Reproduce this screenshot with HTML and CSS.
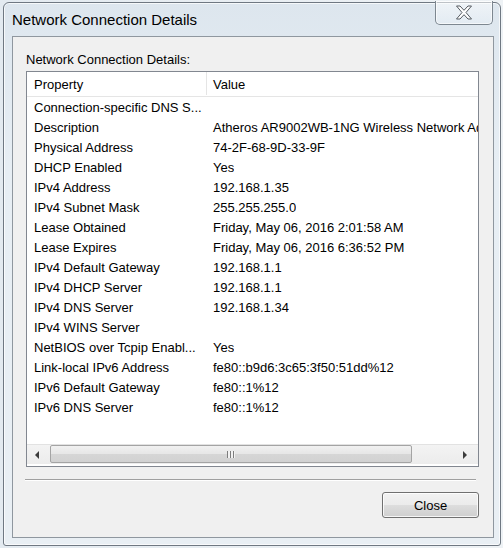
FILE: index.html
```html
<!DOCTYPE html>
<html lang="en">
<head>
    <meta charset="UTF-8">
    <meta name="viewport" content="width=device-width, initial-scale=1.0">
    <title>Network Connection Details</title>
    <link rel="stylesheet" href="styles.css">
</head>
<body>
    <div class="window">
        <div class="titlebar">
            <span class="title">Network Connection Details</span>
            <button class="close-x" aria-label="Close">
                <svg width="18" height="15" viewBox="0 0 18 15">
                    <polygon points="1.5,1 5,1 9,5.3 13,1 16.5,1 11,7.5 16.5,14 13,14 9,9.7 5,14 1.5,14 7,7.5" fill="#ffffff" stroke="#555b61" stroke-width="1" stroke-linejoin="round"/>
                </svg>
            </button>
        </div>

        <div class="client">
            <div class="caption">Network Connection Details:</div>

            <div class="list">
                <div class="list-head">
                    <div class="head-prop">Property</div>
                    <div class="head-val">Value</div>
                </div>
                <div class="rows">
                    <div class="row"><span class="prop">Connection-specific DNS S...</span><span class="val"></span></div>
                    <div class="row"><span class="prop">Description</span><span class="val">Atheros AR9002WB-1NG Wireless Network Adapter</span></div>
                    <div class="row"><span class="prop">Physical Address</span><span class="val">74-2F-68-9D-33-9F</span></div>
                    <div class="row"><span class="prop">DHCP Enabled</span><span class="val">Yes</span></div>
                    <div class="row"><span class="prop">IPv4 Address</span><span class="val">192.168.1.35</span></div>
                    <div class="row"><span class="prop">IPv4 Subnet Mask</span><span class="val">255.255.255.0</span></div>
                    <div class="row"><span class="prop">Lease Obtained</span><span class="val">Friday, May 06, 2016 2:01:58 AM</span></div>
                    <div class="row"><span class="prop">Lease Expires</span><span class="val">Friday, May 06, 2016 6:36:52 PM</span></div>
                    <div class="row"><span class="prop">IPv4 Default Gateway</span><span class="val">192.168.1.1</span></div>
                    <div class="row"><span class="prop">IPv4 DHCP Server</span><span class="val">192.168.1.1</span></div>
                    <div class="row"><span class="prop">IPv4 DNS Server</span><span class="val">192.168.1.34</span></div>
                    <div class="row"><span class="prop">IPv4 WINS Server</span><span class="val"></span></div>
                    <div class="row"><span class="prop">NetBIOS over Tcpip Enabl...</span><span class="val">Yes</span></div>
                    <div class="row"><span class="prop">Link-local IPv6 Address</span><span class="val">fe80::b9d6:3c65:3f50:51dd%12</span></div>
                    <div class="row"><span class="prop">IPv6 Default Gateway</span><span class="val">fe80::1%12</span></div>
                    <div class="row"><span class="prop">IPv6 DNS Server</span><span class="val">fe80::1%12</span></div>
                </div>
                <div class="hscroll">
                    <div class="arrow arrow-left"></div>
                    <div class="thumb"><span class="grip"></span></div>
                    <div class="track"></div>
                    <div class="arrow arrow-right"></div>
                </div>
            </div>

            <div class="sep"></div>

            <div class="actions">
                <button class="btn">Close</button>
            </div>
        </div>
    </div>
</body>
</html>
```

FILE: styles.css
```css
body {
    margin: 0;
    height: 548px;
    overflow: hidden;
    background: linear-gradient(to right, #e3eaf0, #eef2f5);
    font-family: "Liberation Sans", Arial, sans-serif;
    color: #000;
}
.window {
    margin: 2px 0 0 3px;
    width: 498px;
    height: 544px;
    box-sizing: border-box;
    border: 1px solid #6f7882;
    border-radius: 6px 6px 3px 3px;
    background: linear-gradient(to bottom, #dde6ee 0%, #e7eef4 30%, #e9eff4 100%);
    box-shadow: inset 0 0 0 1px rgba(255, 255, 255, 0.7);
    display: flex;
    flex-direction: column;
}
.titlebar {
    height: 33px;
    display: flex;
    align-items: flex-start;
    flex-shrink: 0;
}
.title {
    padding: 7px 0 0 8px;
    font-size: 15px;
    line-height: 20px;
    color: #000;
}
.close-x {
    margin: -2px 7px 0 auto;
    width: 58px;
    height: 24px;
    padding: 0;
    border: 1px solid #7d8790;
    border-top: none;
    border-radius: 0 0 5px 5px;
    background: linear-gradient(to bottom, rgba(255, 255, 255, 0.55), rgba(230, 238, 245, 0.6));
    box-shadow: inset 0 0 0 1px rgba(255, 255, 255, 0.6);
    display: flex;
    align-items: center;
    justify-content: center;
}
.client {
    flex: 1;
    margin: 0 6px 7px 8px;
    border: 1px solid #8f979f;
    background-color: #f0f0f0;
    padding: 15px 14px 0 13px;
    display: flex;
    flex-direction: column;
}
.caption {
    font-size: 13px;
    line-height: 16px;
    margin-bottom: 3px;
}
.list {
    height: 396px;
    box-sizing: border-box;
    border: 1px solid #828790;
    background-color: #fff;
    display: flex;
    flex-direction: column;
    overflow: hidden;
    font-size: 13px;
}
.list-head {
    display: flex;
    height: 24px;
    border-bottom: 1px solid #e5e5e5;
    flex-shrink: 0;
}
.head-prop,
.head-val {
    padding-top: 2px;
    line-height: 22px;
}
.head-prop {
    width: 172px;
    padding-left: 7px;
    border-right: 1px solid #e5e5e5;
    margin-bottom: 1px;
}
.head-val {
    padding-left: 6px;
}
.rows {
    flex: 1;
    padding-top: 1px;
}
.row {
    display: flex;
    height: 20px;
    line-height: 20px;
    white-space: nowrap;
}
.prop {
    width: 173px;
    padding-left: 7px;
    flex-shrink: 0;
    overflow: hidden;
}
.val {
    padding-left: 6px;
    overflow: hidden;
}
.hscroll {
    display: flex;
    height: 19px;
    margin-bottom: 2px;
    border-top: 1px solid #e2e2e2;
    background: linear-gradient(to bottom, #f3f3f3, #ececec);
    flex-shrink: 0;
}
.arrow {
    width: 23px;
    position: relative;
}
.arrow-left::after,
.arrow-right::after {
    content: "";
    position: absolute;
    top: 6px;
    border-top: 4px solid transparent;
    border-bottom: 4px solid transparent;
}
.arrow-left::after {
    left: 8px;
    border-right: 4px solid #3c3c3c;
}
.arrow-right::after {
    right: 11px;
    border-left: 4px solid #3c3c3c;
}
.thumb {
    width: 360px;
    margin: 0 0 1px;
    border: 1px solid #a4a4a4;
    border-radius: 2px;
    background: linear-gradient(to bottom, #f1f1f1 0%, #e6e6e6 50%, #d6d6d6 51%, #d2d2d2 100%);
    display: flex;
    align-items: center;
    justify-content: center;
}
.grip {
    width: 8px;
    height: 7px;
    background: repeating-linear-gradient(to right, #7d7d7d 0, #7d7d7d 1px, #f2f2f2 1px, #f2f2f2 3px);
}
.track {
    flex: 1;
}
.sep {
    margin: 12px 3px 0 -1px;
    height: 1px;
    background-color: #a0a0a0;
    border-bottom: 1px solid #fff;
}
.actions {
    display: flex;
    justify-content: flex-end;
    margin-top: 11px;
}
.btn {
    width: 97px;
    height: 26px;
    padding: 0;
    font-family: "Liberation Sans", Arial, sans-serif;
    font-size: 13px;
    color: #000;
    border: 1px solid #707070;
    border-radius: 3px;
    background: linear-gradient(to bottom, #f2f2f2 0%, #ebebeb 50%, #dddddd 51%, #cfcfcf 100%);
    box-shadow: inset 0 0 0 1px rgba(255, 255, 255, 0.8);
}
```
